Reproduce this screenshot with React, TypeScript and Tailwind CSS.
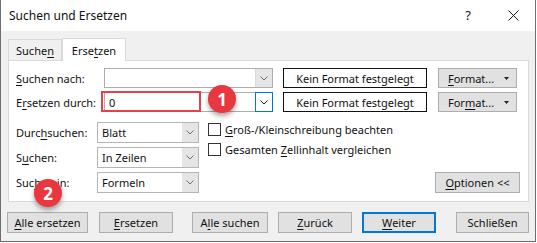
import React from 'react';

const font = { fontFamily: '"Noto Sans", "Open Sans", sans-serif' };

function Chevron({ color = '#606060' }: { color?: string }) {
  return (
    <svg width="8" height="5" viewBox="0 0 8 5" fill="none">
      <path d="M0.5 0.5 L4 4 L7.5 0.5" stroke={color} strokeWidth="1" />
    </svg>
  );
}

function Caret() {
  return (
    <svg width="5" height="3" viewBox="0 0 5 3" className="shrink-0">
      <polygon points="0,0 5,0 2.5,3" fill="#222" />
    </svg>
  );
}

function U({ children }: { children: React.ReactNode }) {
  return <span className="underline underline-offset-[2px]">{children}</span>;
}

function Btn({ children, w, focused }: { children: React.ReactNode; w: string; focused?: boolean }) {
  return (
    <div
      className={`${w} h-[21px] flex items-center justify-center bg-[#e1e1e1] text-[#111] ${
        focused ? 'border-2 border-[#0078d7]' : 'border border-[#adadad]'
      }`}
    >
      {children}
    </div>
  );
}

function Combo({ value, w, focused }: { value?: string; w: string; focused?: boolean }) {
  return (
    <div className={`${w} h-[20px] flex border border-[#adadad] bg-white`}>
      <div className="flex-1 flex items-center pl-[4px] text-[#111]">{value}</div>
      <div
        className={`w-[17px] flex items-center justify-center ${
          focused ? 'border border-[#0078d7] bg-white -m-px h-[20px] w-[18px]' : 'bg-[#e5e5e5] border-l border-[#dadada]'
        }`}
      >
        <Chevron color={focused ? '#1a1a1a' : '#707070'} />
      </div>
    </div>
  );
}

function FormatBtn({ children }: { children: React.ReactNode }) {
  return (
    <div className="ml-[11px] w-[79px] h-[20px] flex items-center bg-[#e1e1e1] border border-[#adadad] pl-[9px] pr-[7px] text-[#111]">
      <span className="whitespace-nowrap">{children}</span>
      <span className="ml-auto flex">
        <Caret />
      </span>
    </div>
  );
}

function Select({ value }: { value: string }) {
  return (
    <div className="w-[102px] h-[21px] flex border border-[#b5b5b5] bg-white">
      <div className="flex-1 flex items-center pl-[4px] text-[#111]">{value}</div>
      <div className="w-[16px] flex items-center justify-center bg-[#e5e5e5]">
        <Chevron color="#707070" />
      </div>
    </div>
  );
}

function Check({ children }: { children: React.ReactNode }) {
  return (
    <div className="flex items-center gap-[4px] h-[13px]">
      <div className="w-[13px] h-[13px] border border-[#333] bg-white" />
      <span className="text-[#111]">{children}</span>
    </div>
  );
}

function Callout({ n, className }: { n: string; className: string }) {
  return (
    <div
      className={`absolute w-[28px] h-[28px] rounded-full bg-[#e8373f] flex items-center justify-center text-white font-bold text-[17px] shadow-[0_3px_5px_rgba(0,0,0,0.35)] ${className}`}
    >
      {n}
    </div>
  );
}

export default function App() {
  return (
    <div className="w-[537px] h-[243px] bg-white text-[11px] leading-none" style={font}>
      <div className="relative w-[536px] h-[242px] flex flex-col bg-[#f0f0f0] border-l border-r border-b border-[#6e6e6e]">
        {/* title bar */}
        <div className="h-[31px] bg-white flex items-center pl-[8px] pr-[16px] text-[12px] text-[#111]">
          <span className="flex-1">Suchen und Ersetzen</span>
          <span className="mr-[37px] text-[13px]">?</span>
          <svg width="11" height="11" viewBox="0 0 11 11">
            <path d="M0.5 0.5 L10.5 10.5 M10.5 0.5 L0.5 10.5" stroke="#111" strokeWidth="1" />
          </svg>
        </div>

        {/* tabs */}
        <div className="h-[29px] flex items-end pl-[7px]">
          <div className="w-[54px] h-[21px] flex items-center justify-center border border-b-0 border-[#d9d9d9] text-[#111]">
            <span>
              Suche<U>n</U>
            </span>
          </div>
          <div className="w-[64px] h-[23px] -mb-px z-10 flex items-center justify-center bg-white border border-b-0 border-[#d9d9d9] text-[#111]">
            <span>
              Erse<U>t</U>zen
            </span>
          </div>
        </div>

        {/* panel */}
        <div className="ml-[7px] w-[521px] h-[142px] bg-white border border-[#d9d9d9] pt-[7px] pl-[7px] pr-[8px]">
          <div className="flex flex-col gap-[4px]">
            <div className="flex items-center">
              <div className="w-[88px] text-[#111]">
                <U>S</U>uchen nach:
              </div>
              <Combo w="w-[169px]" />
              <div className="ml-[10px] w-[144px] h-[20px] border border-[#111] flex items-center justify-center text-[#111]">
                Kein Format festgelegt
              </div>
              <FormatBtn>
                <U>F</U>ormat...
              </FormatBtn>
            </div>
            <div className="flex items-center">
              <div className="w-[88px] text-[#111]">
                E<U>r</U>setzen durch:
              </div>
              <Combo w="w-[169px]" value="0" focused />
              <div className="ml-[10px] w-[144px] h-[20px] border border-[#111] flex items-center justify-center text-[#111]">
                Kein Format festgelegt
              </div>
              <FormatBtn>
                For<U>m</U>at...
              </FormatBtn>
            </div>
          </div>

          <div className="flex mt-[10px]">
            <div className="flex flex-col gap-[4px]">
              <div className="flex items-center">
                <div className="w-[81px] text-[#111]">
                  Durc<U>h</U>suchen:
                </div>
                <Select value="Blatt" />
              </div>
              <div className="flex items-center">
                <div className="w-[81px] text-[#111]">
                  S<U>u</U>chen:
                </div>
                <Select value="In Zeilen" />
              </div>
              <div className="flex items-center">
                <div className="w-[81px] text-[#111]">
                  Suc<U>h</U>en in:
                </div>
                <Select value="Formeln" />
              </div>
            </div>
            <div className="ml-[9px] pt-[1px] flex flex-col gap-[7px]">
              <Check>
                <U>G</U>roß-/Kleinschreibung beachten
              </Check>
              <Check>
                Gesamten <U>Z</U>ellinhalt vergleichen
              </Check>
            </div>
            <div className="flex-1 flex justify-end items-end">
              <Btn w="w-[85px]">
                <span>
                  <U>O</U>ptionen &lt;&lt;
                </span>
              </Btn>
            </div>
          </div>
        </div>

        {/* bottom buttons */}
        <div className="flex pl-[6px] mt-[10px]">
          <Btn w="w-[81px]">
            <span>
              <U>A</U>lle ersetzen
            </span>
          </Btn>
          <div className="ml-[11px]">
            <Btn w="w-[74px]">
              <span>
                <U>E</U>rsetzen
              </span>
            </Btn>
          </div>
          <div className="ml-[19px]">
            <Btn w="w-[76px]">
              <span>
                A<U>l</U>le suchen
              </span>
            </Btn>
          </div>
          <div className="ml-[10px]">
            <Btn w="w-[74px]">
              <span>
                <U>Z</U>urück
              </span>
            </Btn>
          </div>
          <div className="ml-[10px]">
            <Btn w="w-[74px]" focused>
              <span>
                <U>W</U>eiter
              </span>
            </Btn>
          </div>
          <div className="ml-[20px]">
            <Btn w="w-[73px]">
              <span>Schließen</span>
            </Btn>
          </div>
        </div>

        {/* annotations */}
        <div className="absolute left-[100px] top-[91px] w-[100px] h-[21px] border-2 border-[#e8404a]" />
        <Callout n="1" className="left-[207px] top-[85px]" />
        <Callout n="2" className="left-[33px] top-[179px]" />
      </div>
    </div>
  );
}
